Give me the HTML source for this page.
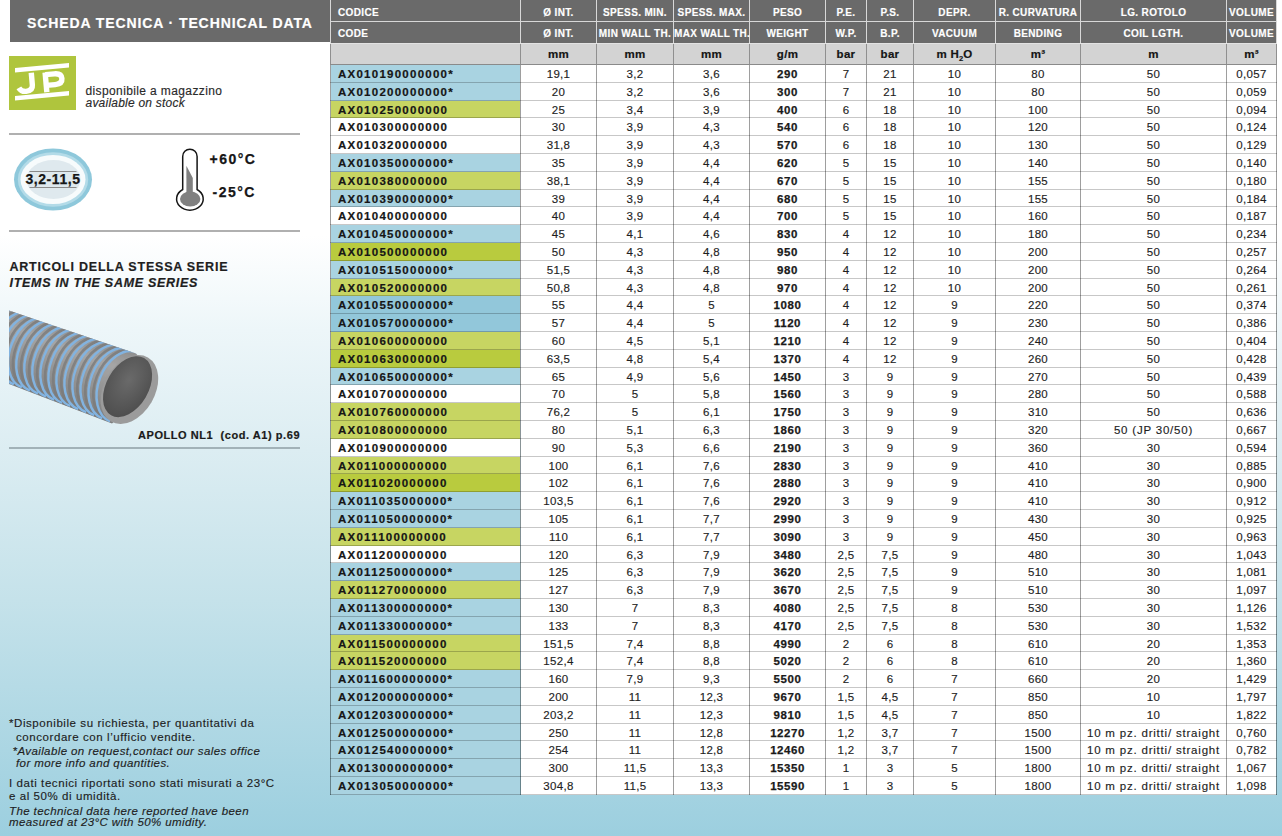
<!DOCTYPE html>
<html><head><meta charset="utf-8">
<style>
html,body{margin:0;padding:0;}
body{width:1282px;height:836px;overflow:hidden;position:relative;font-family:"Liberation Sans",sans-serif;
background:linear-gradient(to bottom,#ffffff 0px,#ffffff 235px,#edf6f9 330px,#dcedf2 450px,#c5e2ea 600px,#9ccfdf 836px);}
.a{position:absolute;}
.t{position:absolute;white-space:nowrap;}
.hl{position:absolute;height:1px;}
.vl{position:absolute;width:1px;}
.hd{position:absolute;color:#fff;font-weight:bold;font-size:10px;-webkit-text-stroke:0.15px #fff;letter-spacing:0.35px;white-space:nowrap;text-align:center;line-height:21px;}
.un{position:absolute;color:#151515;font-weight:bold;font-size:11.5px;-webkit-text-stroke:0.2px #151515;letter-spacing:0.3px;white-space:nowrap;text-align:center;line-height:21px;}
.cd{position:absolute;color:#161616;font-weight:bold;font-size:11.5px;letter-spacing:1.25px;-webkit-text-stroke:0.2px #161616;white-space:nowrap;line-height:18px;padding-left:8px;box-sizing:border-box;}
.dc{position:absolute;color:#1e1e1e;font-size:11.5px;-webkit-text-stroke:0.15px #1e1e1e;white-space:nowrap;text-align:center;line-height:18px;}
.bo{font-weight:bold;letter-spacing:0.55px !important;-webkit-text-stroke:0.25px #1a1a1a;color:#1a1a1a;}
sub{font-size:7.5px;vertical-align:-3px;line-height:0;letter-spacing:0;}
</style></head><body>

<div class="a" style="left:10px;top:0;width:320px;height:42px;background:#6a6a6a;"></div>
<div class="t" style="left:27px;top:15px;font-size:14px;font-weight:bold;color:#fff;letter-spacing:0.9px;line-height:17px;-webkit-text-stroke:0.2px #fff;">SCHEDA TECNICA &middot; TECHNICAL DATA</div>
<div class="a" style="left:330px;top:0;width:947px;height:43px;background:#6a6a6a;"></div>
<div class="a" style="left:330px;top:44px;width:947px;height:20px;background:#d3d3d3;"></div>
<div class="hl" style="left:330px;top:21px;width:947px;background:#d8d8d8;"></div>
<div class="hl" style="left:330px;top:43px;width:947px;background:#e2e2e2;"></div>
<div class="hl" style="left:330px;top:64px;width:947px;background:#8a8a8a;"></div>
<div class="vl" style="left:330px;top:0;height:43px;background:#d8d8d8;"></div>
<div class="vl" style="left:520px;top:0;height:43px;background:#d8d8d8;"></div>
<div class="vl" style="left:596px;top:0;height:43px;background:#d8d8d8;"></div>
<div class="vl" style="left:673px;top:0;height:43px;background:#d8d8d8;"></div>
<div class="vl" style="left:749px;top:0;height:43px;background:#d8d8d8;"></div>
<div class="vl" style="left:825px;top:0;height:43px;background:#d8d8d8;"></div>
<div class="vl" style="left:866px;top:0;height:43px;background:#d8d8d8;"></div>
<div class="vl" style="left:913px;top:0;height:43px;background:#d8d8d8;"></div>
<div class="vl" style="left:995px;top:0;height:43px;background:#d8d8d8;"></div>
<div class="vl" style="left:1080px;top:0;height:43px;background:#d8d8d8;"></div>
<div class="vl" style="left:1226px;top:0;height:43px;background:#d8d8d8;"></div>
<div class="vl" style="left:1276px;top:0;height:43px;background:#d8d8d8;"></div>
<div class="vl" style="left:330px;top:44px;height:20px;background:#8f8f8f;"></div>
<div class="vl" style="left:520px;top:44px;height:20px;background:#8f8f8f;"></div>
<div class="vl" style="left:596px;top:44px;height:20px;background:#8f8f8f;"></div>
<div class="vl" style="left:673px;top:44px;height:20px;background:#8f8f8f;"></div>
<div class="vl" style="left:749px;top:44px;height:20px;background:#8f8f8f;"></div>
<div class="vl" style="left:825px;top:44px;height:20px;background:#8f8f8f;"></div>
<div class="vl" style="left:866px;top:44px;height:20px;background:#8f8f8f;"></div>
<div class="vl" style="left:913px;top:44px;height:20px;background:#8f8f8f;"></div>
<div class="vl" style="left:995px;top:44px;height:20px;background:#8f8f8f;"></div>
<div class="vl" style="left:1080px;top:44px;height:20px;background:#8f8f8f;"></div>
<div class="vl" style="left:1226px;top:44px;height:20px;background:#8f8f8f;"></div>
<div class="vl" style="left:1276px;top:44px;height:20px;background:#8f8f8f;"></div>
<div class="hd" style="left:338px;top:1.7px;text-align:left;">CODICE</div>
<div class="hd" style="left:338px;top:23.2px;text-align:left;">CODE</div>
<div class="hd" style="left:521px;width:75px;top:1.7px;">&Oslash; INT.</div>
<div class="hd" style="left:521px;width:75px;top:23.2px;">&Oslash; INT.</div>
<div class="un" style="left:521px;width:75px;top:44.2px;">mm</div>
<div class="hd" style="left:597px;width:76px;top:1.7px;">SPESS. MIN.</div>
<div class="hd" style="left:597px;width:76px;top:23.2px;">MIN WALL TH.</div>
<div class="un" style="left:597px;width:76px;top:44.2px;">mm</div>
<div class="hd" style="left:674px;width:75px;top:1.7px;">SPESS. MAX.</div>
<div class="hd" style="left:674px;width:75px;top:23.2px;">MAX WALL TH.</div>
<div class="un" style="left:674px;width:75px;top:44.2px;">mm</div>
<div class="hd" style="left:750px;width:75px;top:1.7px;">PESO</div>
<div class="hd" style="left:750px;width:75px;top:23.2px;">WEIGHT</div>
<div class="un" style="left:750px;width:75px;top:44.2px;">g/m</div>
<div class="hd" style="left:826px;width:40px;top:1.7px;">P.E.</div>
<div class="hd" style="left:826px;width:40px;top:23.2px;">W.P.</div>
<div class="un" style="left:826px;width:40px;top:44.2px;">bar</div>
<div class="hd" style="left:867px;width:46px;top:1.7px;">P.S.</div>
<div class="hd" style="left:867px;width:46px;top:23.2px;">B.P.</div>
<div class="un" style="left:867px;width:46px;top:44.2px;">bar</div>
<div class="hd" style="left:914px;width:81px;top:1.7px;">DEPR.</div>
<div class="hd" style="left:914px;width:81px;top:23.2px;">VACUUM</div>
<div class="un" style="left:914px;width:81px;top:44.2px;">m H<sub>2</sub>O</div>
<div class="hd" style="left:996px;width:84px;top:1.7px;">R. CURVATURA</div>
<div class="hd" style="left:996px;width:84px;top:23.2px;">BENDING</div>
<div class="un" style="left:996px;width:84px;top:44.2px;">m&sup3;</div>
<div class="hd" style="left:1081px;width:145px;top:1.7px;">LG. ROTOLO</div>
<div class="hd" style="left:1081px;width:145px;top:23.2px;">COIL LGTH.</div>
<div class="un" style="left:1081px;width:145px;top:44.2px;">m</div>
<div class="hd" style="left:1227px;width:49px;top:1.7px;">VOLUME</div>
<div class="hd" style="left:1227px;width:49px;top:23.2px;">VOLUME</div>
<div class="un" style="left:1227px;width:49px;top:44.2px;">m&sup3;</div>
<div class="a" style="left:331px;top:65px;width:189px;height:18px;background:#a9d3e1;"></div>
<div class="a" style="left:521px;top:65px;width:755px;height:18px;background:#fff;"></div>
<div class="cd" style="left:330px;top:65px;height:18px;">AX010190000000*</div>
<div class="dc" style="left:521px;width:75px;top:64.8px;letter-spacing:0.3px;">19,1</div>
<div class="dc" style="left:597px;width:76px;top:64.8px;letter-spacing:0.3px;">3,2</div>
<div class="dc" style="left:674px;width:75px;top:64.8px;letter-spacing:0.3px;">3,6</div>
<div class="dc bo" style="left:750px;width:75px;top:64.8px;letter-spacing:0.3px;">290</div>
<div class="dc" style="left:826px;width:40px;top:64.8px;letter-spacing:0.3px;">7</div>
<div class="dc" style="left:867px;width:46px;top:64.8px;letter-spacing:0.3px;">21</div>
<div class="dc" style="left:914px;width:81px;top:64.8px;letter-spacing:0.3px;">10</div>
<div class="dc" style="left:996px;width:84px;top:64.8px;letter-spacing:0.3px;">80</div>
<div class="dc" style="left:1081px;width:145px;top:64.8px;letter-spacing:0.3px;">50</div>
<div class="dc" style="left:1227px;width:49px;top:64.8px;letter-spacing:0.3px;">0,057</div>
<div class="hl" style="left:330px;top:82px;width:947px;background:rgba(0,0,0,0.22);"></div>
<div class="a" style="left:331px;top:83px;width:189px;height:18px;background:#a9d3e1;"></div>
<div class="a" style="left:521px;top:83px;width:755px;height:18px;background:#fff;"></div>
<div class="cd" style="left:330px;top:83px;height:18px;">AX010200000000*</div>
<div class="dc" style="left:521px;width:75px;top:82.8px;letter-spacing:0.3px;">20</div>
<div class="dc" style="left:597px;width:76px;top:82.8px;letter-spacing:0.3px;">3,2</div>
<div class="dc" style="left:674px;width:75px;top:82.8px;letter-spacing:0.3px;">3,6</div>
<div class="dc bo" style="left:750px;width:75px;top:82.8px;letter-spacing:0.3px;">300</div>
<div class="dc" style="left:826px;width:40px;top:82.8px;letter-spacing:0.3px;">7</div>
<div class="dc" style="left:867px;width:46px;top:82.8px;letter-spacing:0.3px;">21</div>
<div class="dc" style="left:914px;width:81px;top:82.8px;letter-spacing:0.3px;">10</div>
<div class="dc" style="left:996px;width:84px;top:82.8px;letter-spacing:0.3px;">80</div>
<div class="dc" style="left:1081px;width:145px;top:82.8px;letter-spacing:0.3px;">50</div>
<div class="dc" style="left:1227px;width:49px;top:82.8px;letter-spacing:0.3px;">0,059</div>
<div class="hl" style="left:330px;top:100px;width:947px;background:rgba(0,0,0,0.22);"></div>
<div class="a" style="left:331px;top:101px;width:189px;height:17px;background:#c7d562;"></div>
<div class="a" style="left:521px;top:101px;width:755px;height:17px;background:#fff;"></div>
<div class="cd" style="left:330px;top:101px;height:17px;">AX010250000000</div>
<div class="dc" style="left:521px;width:75px;top:100.8px;letter-spacing:0.3px;">25</div>
<div class="dc" style="left:597px;width:76px;top:100.8px;letter-spacing:0.3px;">3,4</div>
<div class="dc" style="left:674px;width:75px;top:100.8px;letter-spacing:0.3px;">3,9</div>
<div class="dc bo" style="left:750px;width:75px;top:100.8px;letter-spacing:0.3px;">400</div>
<div class="dc" style="left:826px;width:40px;top:100.8px;letter-spacing:0.3px;">6</div>
<div class="dc" style="left:867px;width:46px;top:100.8px;letter-spacing:0.3px;">18</div>
<div class="dc" style="left:914px;width:81px;top:100.8px;letter-spacing:0.3px;">10</div>
<div class="dc" style="left:996px;width:84px;top:100.8px;letter-spacing:0.3px;">100</div>
<div class="dc" style="left:1081px;width:145px;top:100.8px;letter-spacing:0.3px;">50</div>
<div class="dc" style="left:1227px;width:49px;top:100.8px;letter-spacing:0.3px;">0,094</div>
<div class="hl" style="left:330px;top:117px;width:947px;background:rgba(0,0,0,0.22);"></div>
<div class="a" style="left:331px;top:118px;width:189px;height:18px;background:#ffffff;"></div>
<div class="a" style="left:521px;top:118px;width:755px;height:18px;background:#fff;"></div>
<div class="cd" style="left:330px;top:118px;height:18px;">AX010300000000</div>
<div class="dc" style="left:521px;width:75px;top:117.8px;letter-spacing:0.3px;">30</div>
<div class="dc" style="left:597px;width:76px;top:117.8px;letter-spacing:0.3px;">3,9</div>
<div class="dc" style="left:674px;width:75px;top:117.8px;letter-spacing:0.3px;">4,3</div>
<div class="dc bo" style="left:750px;width:75px;top:117.8px;letter-spacing:0.3px;">540</div>
<div class="dc" style="left:826px;width:40px;top:117.8px;letter-spacing:0.3px;">6</div>
<div class="dc" style="left:867px;width:46px;top:117.8px;letter-spacing:0.3px;">18</div>
<div class="dc" style="left:914px;width:81px;top:117.8px;letter-spacing:0.3px;">10</div>
<div class="dc" style="left:996px;width:84px;top:117.8px;letter-spacing:0.3px;">120</div>
<div class="dc" style="left:1081px;width:145px;top:117.8px;letter-spacing:0.3px;">50</div>
<div class="dc" style="left:1227px;width:49px;top:117.8px;letter-spacing:0.3px;">0,124</div>
<div class="hl" style="left:330px;top:135px;width:947px;background:rgba(0,0,0,0.22);"></div>
<div class="a" style="left:331px;top:136px;width:189px;height:18px;background:#ffffff;"></div>
<div class="a" style="left:521px;top:136px;width:755px;height:18px;background:#fff;"></div>
<div class="cd" style="left:330px;top:136px;height:18px;">AX010320000000</div>
<div class="dc" style="left:521px;width:75px;top:135.8px;letter-spacing:0.3px;">31,8</div>
<div class="dc" style="left:597px;width:76px;top:135.8px;letter-spacing:0.3px;">3,9</div>
<div class="dc" style="left:674px;width:75px;top:135.8px;letter-spacing:0.3px;">4,3</div>
<div class="dc bo" style="left:750px;width:75px;top:135.8px;letter-spacing:0.3px;">570</div>
<div class="dc" style="left:826px;width:40px;top:135.8px;letter-spacing:0.3px;">6</div>
<div class="dc" style="left:867px;width:46px;top:135.8px;letter-spacing:0.3px;">18</div>
<div class="dc" style="left:914px;width:81px;top:135.8px;letter-spacing:0.3px;">10</div>
<div class="dc" style="left:996px;width:84px;top:135.8px;letter-spacing:0.3px;">130</div>
<div class="dc" style="left:1081px;width:145px;top:135.8px;letter-spacing:0.3px;">50</div>
<div class="dc" style="left:1227px;width:49px;top:135.8px;letter-spacing:0.3px;">0,129</div>
<div class="hl" style="left:330px;top:153px;width:947px;background:rgba(0,0,0,0.22);"></div>
<div class="a" style="left:331px;top:154px;width:189px;height:18px;background:#a9d3e1;"></div>
<div class="a" style="left:521px;top:154px;width:755px;height:18px;background:#fff;"></div>
<div class="cd" style="left:330px;top:154px;height:18px;">AX010350000000*</div>
<div class="dc" style="left:521px;width:75px;top:153.8px;letter-spacing:0.3px;">35</div>
<div class="dc" style="left:597px;width:76px;top:153.8px;letter-spacing:0.3px;">3,9</div>
<div class="dc" style="left:674px;width:75px;top:153.8px;letter-spacing:0.3px;">4,4</div>
<div class="dc bo" style="left:750px;width:75px;top:153.8px;letter-spacing:0.3px;">620</div>
<div class="dc" style="left:826px;width:40px;top:153.8px;letter-spacing:0.3px;">5</div>
<div class="dc" style="left:867px;width:46px;top:153.8px;letter-spacing:0.3px;">15</div>
<div class="dc" style="left:914px;width:81px;top:153.8px;letter-spacing:0.3px;">10</div>
<div class="dc" style="left:996px;width:84px;top:153.8px;letter-spacing:0.3px;">140</div>
<div class="dc" style="left:1081px;width:145px;top:153.8px;letter-spacing:0.3px;">50</div>
<div class="dc" style="left:1227px;width:49px;top:153.8px;letter-spacing:0.3px;">0,140</div>
<div class="hl" style="left:330px;top:171px;width:947px;background:rgba(0,0,0,0.22);"></div>
<div class="a" style="left:331px;top:172px;width:189px;height:18px;background:#c7d562;"></div>
<div class="a" style="left:521px;top:172px;width:755px;height:18px;background:#fff;"></div>
<div class="cd" style="left:330px;top:172px;height:18px;">AX010380000000</div>
<div class="dc" style="left:521px;width:75px;top:171.8px;letter-spacing:0.3px;">38,1</div>
<div class="dc" style="left:597px;width:76px;top:171.8px;letter-spacing:0.3px;">3,9</div>
<div class="dc" style="left:674px;width:75px;top:171.8px;letter-spacing:0.3px;">4,4</div>
<div class="dc bo" style="left:750px;width:75px;top:171.8px;letter-spacing:0.3px;">670</div>
<div class="dc" style="left:826px;width:40px;top:171.8px;letter-spacing:0.3px;">5</div>
<div class="dc" style="left:867px;width:46px;top:171.8px;letter-spacing:0.3px;">15</div>
<div class="dc" style="left:914px;width:81px;top:171.8px;letter-spacing:0.3px;">10</div>
<div class="dc" style="left:996px;width:84px;top:171.8px;letter-spacing:0.3px;">155</div>
<div class="dc" style="left:1081px;width:145px;top:171.8px;letter-spacing:0.3px;">50</div>
<div class="dc" style="left:1227px;width:49px;top:171.8px;letter-spacing:0.3px;">0,180</div>
<div class="hl" style="left:330px;top:189px;width:947px;background:rgba(0,0,0,0.22);"></div>
<div class="a" style="left:331px;top:190px;width:189px;height:17px;background:#a9d3e1;"></div>
<div class="a" style="left:521px;top:190px;width:755px;height:17px;background:#fff;"></div>
<div class="cd" style="left:330px;top:190px;height:17px;">AX010390000000*</div>
<div class="dc" style="left:521px;width:75px;top:189.8px;letter-spacing:0.3px;">39</div>
<div class="dc" style="left:597px;width:76px;top:189.8px;letter-spacing:0.3px;">3,9</div>
<div class="dc" style="left:674px;width:75px;top:189.8px;letter-spacing:0.3px;">4,4</div>
<div class="dc bo" style="left:750px;width:75px;top:189.8px;letter-spacing:0.3px;">680</div>
<div class="dc" style="left:826px;width:40px;top:189.8px;letter-spacing:0.3px;">5</div>
<div class="dc" style="left:867px;width:46px;top:189.8px;letter-spacing:0.3px;">15</div>
<div class="dc" style="left:914px;width:81px;top:189.8px;letter-spacing:0.3px;">10</div>
<div class="dc" style="left:996px;width:84px;top:189.8px;letter-spacing:0.3px;">155</div>
<div class="dc" style="left:1081px;width:145px;top:189.8px;letter-spacing:0.3px;">50</div>
<div class="dc" style="left:1227px;width:49px;top:189.8px;letter-spacing:0.3px;">0,184</div>
<div class="hl" style="left:330px;top:206px;width:947px;background:rgba(0,0,0,0.22);"></div>
<div class="a" style="left:331px;top:207px;width:189px;height:18px;background:#ffffff;"></div>
<div class="a" style="left:521px;top:207px;width:755px;height:18px;background:#fff;"></div>
<div class="cd" style="left:330px;top:207px;height:18px;">AX010400000000</div>
<div class="dc" style="left:521px;width:75px;top:206.8px;letter-spacing:0.3px;">40</div>
<div class="dc" style="left:597px;width:76px;top:206.8px;letter-spacing:0.3px;">3,9</div>
<div class="dc" style="left:674px;width:75px;top:206.8px;letter-spacing:0.3px;">4,4</div>
<div class="dc bo" style="left:750px;width:75px;top:206.8px;letter-spacing:0.3px;">700</div>
<div class="dc" style="left:826px;width:40px;top:206.8px;letter-spacing:0.3px;">5</div>
<div class="dc" style="left:867px;width:46px;top:206.8px;letter-spacing:0.3px;">15</div>
<div class="dc" style="left:914px;width:81px;top:206.8px;letter-spacing:0.3px;">10</div>
<div class="dc" style="left:996px;width:84px;top:206.8px;letter-spacing:0.3px;">160</div>
<div class="dc" style="left:1081px;width:145px;top:206.8px;letter-spacing:0.3px;">50</div>
<div class="dc" style="left:1227px;width:49px;top:206.8px;letter-spacing:0.3px;">0,187</div>
<div class="hl" style="left:330px;top:224px;width:947px;background:rgba(0,0,0,0.22);"></div>
<div class="a" style="left:331px;top:225px;width:189px;height:18px;background:#a9d3e1;"></div>
<div class="a" style="left:521px;top:225px;width:755px;height:18px;background:#fff;"></div>
<div class="cd" style="left:330px;top:225px;height:18px;">AX010450000000*</div>
<div class="dc" style="left:521px;width:75px;top:224.8px;letter-spacing:0.3px;">45</div>
<div class="dc" style="left:597px;width:76px;top:224.8px;letter-spacing:0.3px;">4,1</div>
<div class="dc" style="left:674px;width:75px;top:224.8px;letter-spacing:0.3px;">4,6</div>
<div class="dc bo" style="left:750px;width:75px;top:224.8px;letter-spacing:0.3px;">830</div>
<div class="dc" style="left:826px;width:40px;top:224.8px;letter-spacing:0.3px;">4</div>
<div class="dc" style="left:867px;width:46px;top:224.8px;letter-spacing:0.3px;">12</div>
<div class="dc" style="left:914px;width:81px;top:224.8px;letter-spacing:0.3px;">10</div>
<div class="dc" style="left:996px;width:84px;top:224.8px;letter-spacing:0.3px;">180</div>
<div class="dc" style="left:1081px;width:145px;top:224.8px;letter-spacing:0.3px;">50</div>
<div class="dc" style="left:1227px;width:49px;top:224.8px;letter-spacing:0.3px;">0,234</div>
<div class="hl" style="left:330px;top:242px;width:947px;background:rgba(0,0,0,0.22);"></div>
<div class="a" style="left:331px;top:243px;width:189px;height:18px;background:#b9cb3e;"></div>
<div class="a" style="left:521px;top:243px;width:755px;height:18px;background:#fff;"></div>
<div class="cd" style="left:330px;top:243px;height:18px;">AX010500000000</div>
<div class="dc" style="left:521px;width:75px;top:242.8px;letter-spacing:0.3px;">50</div>
<div class="dc" style="left:597px;width:76px;top:242.8px;letter-spacing:0.3px;">4,3</div>
<div class="dc" style="left:674px;width:75px;top:242.8px;letter-spacing:0.3px;">4,8</div>
<div class="dc bo" style="left:750px;width:75px;top:242.8px;letter-spacing:0.3px;">950</div>
<div class="dc" style="left:826px;width:40px;top:242.8px;letter-spacing:0.3px;">4</div>
<div class="dc" style="left:867px;width:46px;top:242.8px;letter-spacing:0.3px;">12</div>
<div class="dc" style="left:914px;width:81px;top:242.8px;letter-spacing:0.3px;">10</div>
<div class="dc" style="left:996px;width:84px;top:242.8px;letter-spacing:0.3px;">200</div>
<div class="dc" style="left:1081px;width:145px;top:242.8px;letter-spacing:0.3px;">50</div>
<div class="dc" style="left:1227px;width:49px;top:242.8px;letter-spacing:0.3px;">0,257</div>
<div class="hl" style="left:330px;top:260px;width:947px;background:rgba(0,0,0,0.22);"></div>
<div class="a" style="left:331px;top:261px;width:189px;height:18px;background:#a9d3e1;"></div>
<div class="a" style="left:521px;top:261px;width:755px;height:18px;background:#fff;"></div>
<div class="cd" style="left:330px;top:261px;height:18px;">AX010515000000*</div>
<div class="dc" style="left:521px;width:75px;top:260.8px;letter-spacing:0.3px;">51,5</div>
<div class="dc" style="left:597px;width:76px;top:260.8px;letter-spacing:0.3px;">4,3</div>
<div class="dc" style="left:674px;width:75px;top:260.8px;letter-spacing:0.3px;">4,8</div>
<div class="dc bo" style="left:750px;width:75px;top:260.8px;letter-spacing:0.3px;">980</div>
<div class="dc" style="left:826px;width:40px;top:260.8px;letter-spacing:0.3px;">4</div>
<div class="dc" style="left:867px;width:46px;top:260.8px;letter-spacing:0.3px;">12</div>
<div class="dc" style="left:914px;width:81px;top:260.8px;letter-spacing:0.3px;">10</div>
<div class="dc" style="left:996px;width:84px;top:260.8px;letter-spacing:0.3px;">200</div>
<div class="dc" style="left:1081px;width:145px;top:260.8px;letter-spacing:0.3px;">50</div>
<div class="dc" style="left:1227px;width:49px;top:260.8px;letter-spacing:0.3px;">0,264</div>
<div class="hl" style="left:330px;top:278px;width:947px;background:rgba(0,0,0,0.22);"></div>
<div class="a" style="left:331px;top:279px;width:189px;height:17px;background:#c7d562;"></div>
<div class="a" style="left:521px;top:279px;width:755px;height:17px;background:#fff;"></div>
<div class="cd" style="left:330px;top:279px;height:17px;">AX010520000000</div>
<div class="dc" style="left:521px;width:75px;top:278.8px;letter-spacing:0.3px;">50,8</div>
<div class="dc" style="left:597px;width:76px;top:278.8px;letter-spacing:0.3px;">4,3</div>
<div class="dc" style="left:674px;width:75px;top:278.8px;letter-spacing:0.3px;">4,8</div>
<div class="dc bo" style="left:750px;width:75px;top:278.8px;letter-spacing:0.3px;">970</div>
<div class="dc" style="left:826px;width:40px;top:278.8px;letter-spacing:0.3px;">4</div>
<div class="dc" style="left:867px;width:46px;top:278.8px;letter-spacing:0.3px;">12</div>
<div class="dc" style="left:914px;width:81px;top:278.8px;letter-spacing:0.3px;">10</div>
<div class="dc" style="left:996px;width:84px;top:278.8px;letter-spacing:0.3px;">200</div>
<div class="dc" style="left:1081px;width:145px;top:278.8px;letter-spacing:0.3px;">50</div>
<div class="dc" style="left:1227px;width:49px;top:278.8px;letter-spacing:0.3px;">0,261</div>
<div class="hl" style="left:330px;top:295px;width:947px;background:rgba(0,0,0,0.22);"></div>
<div class="a" style="left:331px;top:296px;width:189px;height:18px;background:#92c7da;"></div>
<div class="a" style="left:521px;top:296px;width:755px;height:18px;background:#fff;"></div>
<div class="cd" style="left:330px;top:296px;height:18px;">AX010550000000*</div>
<div class="dc" style="left:521px;width:75px;top:295.8px;letter-spacing:0.3px;">55</div>
<div class="dc" style="left:597px;width:76px;top:295.8px;letter-spacing:0.3px;">4,4</div>
<div class="dc" style="left:674px;width:75px;top:295.8px;letter-spacing:0.3px;">5</div>
<div class="dc bo" style="left:750px;width:75px;top:295.8px;letter-spacing:0.3px;">1080</div>
<div class="dc" style="left:826px;width:40px;top:295.8px;letter-spacing:0.3px;">4</div>
<div class="dc" style="left:867px;width:46px;top:295.8px;letter-spacing:0.3px;">12</div>
<div class="dc" style="left:914px;width:81px;top:295.8px;letter-spacing:0.3px;">9</div>
<div class="dc" style="left:996px;width:84px;top:295.8px;letter-spacing:0.3px;">220</div>
<div class="dc" style="left:1081px;width:145px;top:295.8px;letter-spacing:0.3px;">50</div>
<div class="dc" style="left:1227px;width:49px;top:295.8px;letter-spacing:0.3px;">0,374</div>
<div class="hl" style="left:330px;top:313px;width:947px;background:rgba(0,0,0,0.22);"></div>
<div class="a" style="left:331px;top:314px;width:189px;height:18px;background:#92c7da;"></div>
<div class="a" style="left:521px;top:314px;width:755px;height:18px;background:#fff;"></div>
<div class="cd" style="left:330px;top:314px;height:18px;">AX010570000000*</div>
<div class="dc" style="left:521px;width:75px;top:313.8px;letter-spacing:0.3px;">57</div>
<div class="dc" style="left:597px;width:76px;top:313.8px;letter-spacing:0.3px;">4,4</div>
<div class="dc" style="left:674px;width:75px;top:313.8px;letter-spacing:0.3px;">5</div>
<div class="dc bo" style="left:750px;width:75px;top:313.8px;letter-spacing:0.3px;">1120</div>
<div class="dc" style="left:826px;width:40px;top:313.8px;letter-spacing:0.3px;">4</div>
<div class="dc" style="left:867px;width:46px;top:313.8px;letter-spacing:0.3px;">12</div>
<div class="dc" style="left:914px;width:81px;top:313.8px;letter-spacing:0.3px;">9</div>
<div class="dc" style="left:996px;width:84px;top:313.8px;letter-spacing:0.3px;">230</div>
<div class="dc" style="left:1081px;width:145px;top:313.8px;letter-spacing:0.3px;">50</div>
<div class="dc" style="left:1227px;width:49px;top:313.8px;letter-spacing:0.3px;">0,386</div>
<div class="hl" style="left:330px;top:331px;width:947px;background:rgba(0,0,0,0.22);"></div>
<div class="a" style="left:331px;top:332px;width:189px;height:18px;background:#c7d562;"></div>
<div class="a" style="left:521px;top:332px;width:755px;height:18px;background:#fff;"></div>
<div class="cd" style="left:330px;top:332px;height:18px;">AX010600000000</div>
<div class="dc" style="left:521px;width:75px;top:331.8px;letter-spacing:0.3px;">60</div>
<div class="dc" style="left:597px;width:76px;top:331.8px;letter-spacing:0.3px;">4,5</div>
<div class="dc" style="left:674px;width:75px;top:331.8px;letter-spacing:0.3px;">5,1</div>
<div class="dc bo" style="left:750px;width:75px;top:331.8px;letter-spacing:0.3px;">1210</div>
<div class="dc" style="left:826px;width:40px;top:331.8px;letter-spacing:0.3px;">4</div>
<div class="dc" style="left:867px;width:46px;top:331.8px;letter-spacing:0.3px;">12</div>
<div class="dc" style="left:914px;width:81px;top:331.8px;letter-spacing:0.3px;">9</div>
<div class="dc" style="left:996px;width:84px;top:331.8px;letter-spacing:0.3px;">240</div>
<div class="dc" style="left:1081px;width:145px;top:331.8px;letter-spacing:0.3px;">50</div>
<div class="dc" style="left:1227px;width:49px;top:331.8px;letter-spacing:0.3px;">0,404</div>
<div class="hl" style="left:330px;top:349px;width:947px;background:rgba(0,0,0,0.22);"></div>
<div class="a" style="left:331px;top:350px;width:189px;height:18px;background:#b9cb3e;"></div>
<div class="a" style="left:521px;top:350px;width:755px;height:18px;background:#fff;"></div>
<div class="cd" style="left:330px;top:350px;height:18px;">AX010630000000</div>
<div class="dc" style="left:521px;width:75px;top:349.8px;letter-spacing:0.3px;">63,5</div>
<div class="dc" style="left:597px;width:76px;top:349.8px;letter-spacing:0.3px;">4,8</div>
<div class="dc" style="left:674px;width:75px;top:349.8px;letter-spacing:0.3px;">5,4</div>
<div class="dc bo" style="left:750px;width:75px;top:349.8px;letter-spacing:0.3px;">1370</div>
<div class="dc" style="left:826px;width:40px;top:349.8px;letter-spacing:0.3px;">4</div>
<div class="dc" style="left:867px;width:46px;top:349.8px;letter-spacing:0.3px;">12</div>
<div class="dc" style="left:914px;width:81px;top:349.8px;letter-spacing:0.3px;">9</div>
<div class="dc" style="left:996px;width:84px;top:349.8px;letter-spacing:0.3px;">260</div>
<div class="dc" style="left:1081px;width:145px;top:349.8px;letter-spacing:0.3px;">50</div>
<div class="dc" style="left:1227px;width:49px;top:349.8px;letter-spacing:0.3px;">0,428</div>
<div class="hl" style="left:330px;top:367px;width:947px;background:rgba(0,0,0,0.22);"></div>
<div class="a" style="left:331px;top:368px;width:189px;height:17px;background:#a9d3e1;"></div>
<div class="a" style="left:521px;top:368px;width:755px;height:17px;background:#fff;"></div>
<div class="cd" style="left:330px;top:368px;height:17px;">AX010650000000*</div>
<div class="dc" style="left:521px;width:75px;top:367.8px;letter-spacing:0.3px;">65</div>
<div class="dc" style="left:597px;width:76px;top:367.8px;letter-spacing:0.3px;">4,9</div>
<div class="dc" style="left:674px;width:75px;top:367.8px;letter-spacing:0.3px;">5,6</div>
<div class="dc bo" style="left:750px;width:75px;top:367.8px;letter-spacing:0.3px;">1450</div>
<div class="dc" style="left:826px;width:40px;top:367.8px;letter-spacing:0.3px;">3</div>
<div class="dc" style="left:867px;width:46px;top:367.8px;letter-spacing:0.3px;">9</div>
<div class="dc" style="left:914px;width:81px;top:367.8px;letter-spacing:0.3px;">9</div>
<div class="dc" style="left:996px;width:84px;top:367.8px;letter-spacing:0.3px;">270</div>
<div class="dc" style="left:1081px;width:145px;top:367.8px;letter-spacing:0.3px;">50</div>
<div class="dc" style="left:1227px;width:49px;top:367.8px;letter-spacing:0.3px;">0,439</div>
<div class="hl" style="left:330px;top:384px;width:947px;background:rgba(0,0,0,0.22);"></div>
<div class="a" style="left:331px;top:385px;width:189px;height:18px;background:#ffffff;"></div>
<div class="a" style="left:521px;top:385px;width:755px;height:18px;background:#fff;"></div>
<div class="cd" style="left:330px;top:385px;height:18px;">AX010700000000</div>
<div class="dc" style="left:521px;width:75px;top:384.8px;letter-spacing:0.3px;">70</div>
<div class="dc" style="left:597px;width:76px;top:384.8px;letter-spacing:0.3px;">5</div>
<div class="dc" style="left:674px;width:75px;top:384.8px;letter-spacing:0.3px;">5,8</div>
<div class="dc bo" style="left:750px;width:75px;top:384.8px;letter-spacing:0.3px;">1560</div>
<div class="dc" style="left:826px;width:40px;top:384.8px;letter-spacing:0.3px;">3</div>
<div class="dc" style="left:867px;width:46px;top:384.8px;letter-spacing:0.3px;">9</div>
<div class="dc" style="left:914px;width:81px;top:384.8px;letter-spacing:0.3px;">9</div>
<div class="dc" style="left:996px;width:84px;top:384.8px;letter-spacing:0.3px;">280</div>
<div class="dc" style="left:1081px;width:145px;top:384.8px;letter-spacing:0.3px;">50</div>
<div class="dc" style="left:1227px;width:49px;top:384.8px;letter-spacing:0.3px;">0,588</div>
<div class="hl" style="left:330px;top:402px;width:947px;background:rgba(0,0,0,0.22);"></div>
<div class="a" style="left:331px;top:403px;width:189px;height:18px;background:#c7d562;"></div>
<div class="a" style="left:521px;top:403px;width:755px;height:18px;background:#fff;"></div>
<div class="cd" style="left:330px;top:403px;height:18px;">AX010760000000</div>
<div class="dc" style="left:521px;width:75px;top:402.8px;letter-spacing:0.3px;">76,2</div>
<div class="dc" style="left:597px;width:76px;top:402.8px;letter-spacing:0.3px;">5</div>
<div class="dc" style="left:674px;width:75px;top:402.8px;letter-spacing:0.3px;">6,1</div>
<div class="dc bo" style="left:750px;width:75px;top:402.8px;letter-spacing:0.3px;">1750</div>
<div class="dc" style="left:826px;width:40px;top:402.8px;letter-spacing:0.3px;">3</div>
<div class="dc" style="left:867px;width:46px;top:402.8px;letter-spacing:0.3px;">9</div>
<div class="dc" style="left:914px;width:81px;top:402.8px;letter-spacing:0.3px;">9</div>
<div class="dc" style="left:996px;width:84px;top:402.8px;letter-spacing:0.3px;">310</div>
<div class="dc" style="left:1081px;width:145px;top:402.8px;letter-spacing:0.3px;">50</div>
<div class="dc" style="left:1227px;width:49px;top:402.8px;letter-spacing:0.3px;">0,636</div>
<div class="hl" style="left:330px;top:420px;width:947px;background:rgba(0,0,0,0.22);"></div>
<div class="a" style="left:331px;top:421px;width:189px;height:18px;background:#c7d562;"></div>
<div class="a" style="left:521px;top:421px;width:755px;height:18px;background:#fff;"></div>
<div class="cd" style="left:330px;top:421px;height:18px;">AX010800000000</div>
<div class="dc" style="left:521px;width:75px;top:420.8px;letter-spacing:0.3px;">80</div>
<div class="dc" style="left:597px;width:76px;top:420.8px;letter-spacing:0.3px;">5,1</div>
<div class="dc" style="left:674px;width:75px;top:420.8px;letter-spacing:0.3px;">6,3</div>
<div class="dc bo" style="left:750px;width:75px;top:420.8px;letter-spacing:0.3px;">1860</div>
<div class="dc" style="left:826px;width:40px;top:420.8px;letter-spacing:0.3px;">3</div>
<div class="dc" style="left:867px;width:46px;top:420.8px;letter-spacing:0.3px;">9</div>
<div class="dc" style="left:914px;width:81px;top:420.8px;letter-spacing:0.3px;">9</div>
<div class="dc" style="left:996px;width:84px;top:420.8px;letter-spacing:0.3px;">320</div>
<div class="dc" style="left:1081px;width:145px;top:420.8px;letter-spacing:0.8px;">50 (JP 30/50)</div>
<div class="dc" style="left:1227px;width:49px;top:420.8px;letter-spacing:0.3px;">0,667</div>
<div class="hl" style="left:330px;top:438px;width:947px;background:rgba(0,0,0,0.22);"></div>
<div class="a" style="left:331px;top:439px;width:189px;height:18px;background:#ffffff;"></div>
<div class="a" style="left:521px;top:439px;width:755px;height:18px;background:#fff;"></div>
<div class="cd" style="left:330px;top:439px;height:18px;">AX010900000000</div>
<div class="dc" style="left:521px;width:75px;top:438.8px;letter-spacing:0.3px;">90</div>
<div class="dc" style="left:597px;width:76px;top:438.8px;letter-spacing:0.3px;">5,3</div>
<div class="dc" style="left:674px;width:75px;top:438.8px;letter-spacing:0.3px;">6,6</div>
<div class="dc bo" style="left:750px;width:75px;top:438.8px;letter-spacing:0.3px;">2190</div>
<div class="dc" style="left:826px;width:40px;top:438.8px;letter-spacing:0.3px;">3</div>
<div class="dc" style="left:867px;width:46px;top:438.8px;letter-spacing:0.3px;">9</div>
<div class="dc" style="left:914px;width:81px;top:438.8px;letter-spacing:0.3px;">9</div>
<div class="dc" style="left:996px;width:84px;top:438.8px;letter-spacing:0.3px;">360</div>
<div class="dc" style="left:1081px;width:145px;top:438.8px;letter-spacing:0.3px;">30</div>
<div class="dc" style="left:1227px;width:49px;top:438.8px;letter-spacing:0.3px;">0,594</div>
<div class="hl" style="left:330px;top:456px;width:947px;background:rgba(0,0,0,0.22);"></div>
<div class="a" style="left:331px;top:457px;width:189px;height:17px;background:#c7d562;"></div>
<div class="a" style="left:521px;top:457px;width:755px;height:17px;background:#fff;"></div>
<div class="cd" style="left:330px;top:457px;height:17px;">AX011000000000</div>
<div class="dc" style="left:521px;width:75px;top:456.8px;letter-spacing:0.3px;">100</div>
<div class="dc" style="left:597px;width:76px;top:456.8px;letter-spacing:0.3px;">6,1</div>
<div class="dc" style="left:674px;width:75px;top:456.8px;letter-spacing:0.3px;">7,6</div>
<div class="dc bo" style="left:750px;width:75px;top:456.8px;letter-spacing:0.3px;">2830</div>
<div class="dc" style="left:826px;width:40px;top:456.8px;letter-spacing:0.3px;">3</div>
<div class="dc" style="left:867px;width:46px;top:456.8px;letter-spacing:0.3px;">9</div>
<div class="dc" style="left:914px;width:81px;top:456.8px;letter-spacing:0.3px;">9</div>
<div class="dc" style="left:996px;width:84px;top:456.8px;letter-spacing:0.3px;">410</div>
<div class="dc" style="left:1081px;width:145px;top:456.8px;letter-spacing:0.3px;">30</div>
<div class="dc" style="left:1227px;width:49px;top:456.8px;letter-spacing:0.3px;">0,885</div>
<div class="hl" style="left:330px;top:473px;width:947px;background:rgba(0,0,0,0.22);"></div>
<div class="a" style="left:331px;top:474px;width:189px;height:18px;background:#b9cb3e;"></div>
<div class="a" style="left:521px;top:474px;width:755px;height:18px;background:#fff;"></div>
<div class="cd" style="left:330px;top:474px;height:18px;">AX011020000000</div>
<div class="dc" style="left:521px;width:75px;top:473.8px;letter-spacing:0.3px;">102</div>
<div class="dc" style="left:597px;width:76px;top:473.8px;letter-spacing:0.3px;">6,1</div>
<div class="dc" style="left:674px;width:75px;top:473.8px;letter-spacing:0.3px;">7,6</div>
<div class="dc bo" style="left:750px;width:75px;top:473.8px;letter-spacing:0.3px;">2880</div>
<div class="dc" style="left:826px;width:40px;top:473.8px;letter-spacing:0.3px;">3</div>
<div class="dc" style="left:867px;width:46px;top:473.8px;letter-spacing:0.3px;">9</div>
<div class="dc" style="left:914px;width:81px;top:473.8px;letter-spacing:0.3px;">9</div>
<div class="dc" style="left:996px;width:84px;top:473.8px;letter-spacing:0.3px;">410</div>
<div class="dc" style="left:1081px;width:145px;top:473.8px;letter-spacing:0.3px;">30</div>
<div class="dc" style="left:1227px;width:49px;top:473.8px;letter-spacing:0.3px;">0,900</div>
<div class="hl" style="left:330px;top:491px;width:947px;background:rgba(0,0,0,0.22);"></div>
<div class="a" style="left:331px;top:492px;width:189px;height:18px;background:#a9d3e1;"></div>
<div class="a" style="left:521px;top:492px;width:755px;height:18px;background:#fff;"></div>
<div class="cd" style="left:330px;top:492px;height:18px;">AX011035000000*</div>
<div class="dc" style="left:521px;width:75px;top:491.8px;letter-spacing:0.3px;">103,5</div>
<div class="dc" style="left:597px;width:76px;top:491.8px;letter-spacing:0.3px;">6,1</div>
<div class="dc" style="left:674px;width:75px;top:491.8px;letter-spacing:0.3px;">7,6</div>
<div class="dc bo" style="left:750px;width:75px;top:491.8px;letter-spacing:0.3px;">2920</div>
<div class="dc" style="left:826px;width:40px;top:491.8px;letter-spacing:0.3px;">3</div>
<div class="dc" style="left:867px;width:46px;top:491.8px;letter-spacing:0.3px;">9</div>
<div class="dc" style="left:914px;width:81px;top:491.8px;letter-spacing:0.3px;">9</div>
<div class="dc" style="left:996px;width:84px;top:491.8px;letter-spacing:0.3px;">410</div>
<div class="dc" style="left:1081px;width:145px;top:491.8px;letter-spacing:0.3px;">30</div>
<div class="dc" style="left:1227px;width:49px;top:491.8px;letter-spacing:0.3px;">0,912</div>
<div class="hl" style="left:330px;top:509px;width:947px;background:rgba(0,0,0,0.22);"></div>
<div class="a" style="left:331px;top:510px;width:189px;height:18px;background:#a9d3e1;"></div>
<div class="a" style="left:521px;top:510px;width:755px;height:18px;background:#fff;"></div>
<div class="cd" style="left:330px;top:510px;height:18px;">AX011050000000*</div>
<div class="dc" style="left:521px;width:75px;top:509.8px;letter-spacing:0.3px;">105</div>
<div class="dc" style="left:597px;width:76px;top:509.8px;letter-spacing:0.3px;">6,1</div>
<div class="dc" style="left:674px;width:75px;top:509.8px;letter-spacing:0.3px;">7,7</div>
<div class="dc bo" style="left:750px;width:75px;top:509.8px;letter-spacing:0.3px;">2990</div>
<div class="dc" style="left:826px;width:40px;top:509.8px;letter-spacing:0.3px;">3</div>
<div class="dc" style="left:867px;width:46px;top:509.8px;letter-spacing:0.3px;">9</div>
<div class="dc" style="left:914px;width:81px;top:509.8px;letter-spacing:0.3px;">9</div>
<div class="dc" style="left:996px;width:84px;top:509.8px;letter-spacing:0.3px;">430</div>
<div class="dc" style="left:1081px;width:145px;top:509.8px;letter-spacing:0.3px;">30</div>
<div class="dc" style="left:1227px;width:49px;top:509.8px;letter-spacing:0.3px;">0,925</div>
<div class="hl" style="left:330px;top:527px;width:947px;background:rgba(0,0,0,0.22);"></div>
<div class="a" style="left:331px;top:528px;width:189px;height:18px;background:#c7d562;"></div>
<div class="a" style="left:521px;top:528px;width:755px;height:18px;background:#fff;"></div>
<div class="cd" style="left:330px;top:528px;height:18px;">AX011100000000</div>
<div class="dc" style="left:521px;width:75px;top:527.8px;letter-spacing:0.3px;">110</div>
<div class="dc" style="left:597px;width:76px;top:527.8px;letter-spacing:0.3px;">6,1</div>
<div class="dc" style="left:674px;width:75px;top:527.8px;letter-spacing:0.3px;">7,7</div>
<div class="dc bo" style="left:750px;width:75px;top:527.8px;letter-spacing:0.3px;">3090</div>
<div class="dc" style="left:826px;width:40px;top:527.8px;letter-spacing:0.3px;">3</div>
<div class="dc" style="left:867px;width:46px;top:527.8px;letter-spacing:0.3px;">9</div>
<div class="dc" style="left:914px;width:81px;top:527.8px;letter-spacing:0.3px;">9</div>
<div class="dc" style="left:996px;width:84px;top:527.8px;letter-spacing:0.3px;">450</div>
<div class="dc" style="left:1081px;width:145px;top:527.8px;letter-spacing:0.3px;">30</div>
<div class="dc" style="left:1227px;width:49px;top:527.8px;letter-spacing:0.3px;">0,963</div>
<div class="hl" style="left:330px;top:545px;width:947px;background:rgba(0,0,0,0.22);"></div>
<div class="a" style="left:331px;top:546px;width:189px;height:17px;background:#ffffff;"></div>
<div class="a" style="left:521px;top:546px;width:755px;height:17px;background:#fff;"></div>
<div class="cd" style="left:330px;top:546px;height:17px;">AX011200000000</div>
<div class="dc" style="left:521px;width:75px;top:545.8px;letter-spacing:0.3px;">120</div>
<div class="dc" style="left:597px;width:76px;top:545.8px;letter-spacing:0.3px;">6,3</div>
<div class="dc" style="left:674px;width:75px;top:545.8px;letter-spacing:0.3px;">7,9</div>
<div class="dc bo" style="left:750px;width:75px;top:545.8px;letter-spacing:0.3px;">3480</div>
<div class="dc" style="left:826px;width:40px;top:545.8px;letter-spacing:0.3px;">2,5</div>
<div class="dc" style="left:867px;width:46px;top:545.8px;letter-spacing:0.3px;">7,5</div>
<div class="dc" style="left:914px;width:81px;top:545.8px;letter-spacing:0.3px;">9</div>
<div class="dc" style="left:996px;width:84px;top:545.8px;letter-spacing:0.3px;">480</div>
<div class="dc" style="left:1081px;width:145px;top:545.8px;letter-spacing:0.3px;">30</div>
<div class="dc" style="left:1227px;width:49px;top:545.8px;letter-spacing:0.3px;">1,043</div>
<div class="hl" style="left:330px;top:562px;width:947px;background:rgba(0,0,0,0.22);"></div>
<div class="a" style="left:331px;top:563px;width:189px;height:18px;background:#a9d3e1;"></div>
<div class="a" style="left:521px;top:563px;width:755px;height:18px;background:#fff;"></div>
<div class="cd" style="left:330px;top:563px;height:18px;">AX011250000000*</div>
<div class="dc" style="left:521px;width:75px;top:562.8px;letter-spacing:0.3px;">125</div>
<div class="dc" style="left:597px;width:76px;top:562.8px;letter-spacing:0.3px;">6,3</div>
<div class="dc" style="left:674px;width:75px;top:562.8px;letter-spacing:0.3px;">7,9</div>
<div class="dc bo" style="left:750px;width:75px;top:562.8px;letter-spacing:0.3px;">3620</div>
<div class="dc" style="left:826px;width:40px;top:562.8px;letter-spacing:0.3px;">2,5</div>
<div class="dc" style="left:867px;width:46px;top:562.8px;letter-spacing:0.3px;">7,5</div>
<div class="dc" style="left:914px;width:81px;top:562.8px;letter-spacing:0.3px;">9</div>
<div class="dc" style="left:996px;width:84px;top:562.8px;letter-spacing:0.3px;">510</div>
<div class="dc" style="left:1081px;width:145px;top:562.8px;letter-spacing:0.3px;">30</div>
<div class="dc" style="left:1227px;width:49px;top:562.8px;letter-spacing:0.3px;">1,081</div>
<div class="hl" style="left:330px;top:580px;width:947px;background:rgba(0,0,0,0.22);"></div>
<div class="a" style="left:331px;top:581px;width:189px;height:18px;background:#c7d562;"></div>
<div class="a" style="left:521px;top:581px;width:755px;height:18px;background:#fff;"></div>
<div class="cd" style="left:330px;top:581px;height:18px;">AX011270000000</div>
<div class="dc" style="left:521px;width:75px;top:580.8px;letter-spacing:0.3px;">127</div>
<div class="dc" style="left:597px;width:76px;top:580.8px;letter-spacing:0.3px;">6,3</div>
<div class="dc" style="left:674px;width:75px;top:580.8px;letter-spacing:0.3px;">7,9</div>
<div class="dc bo" style="left:750px;width:75px;top:580.8px;letter-spacing:0.3px;">3670</div>
<div class="dc" style="left:826px;width:40px;top:580.8px;letter-spacing:0.3px;">2,5</div>
<div class="dc" style="left:867px;width:46px;top:580.8px;letter-spacing:0.3px;">7,5</div>
<div class="dc" style="left:914px;width:81px;top:580.8px;letter-spacing:0.3px;">9</div>
<div class="dc" style="left:996px;width:84px;top:580.8px;letter-spacing:0.3px;">510</div>
<div class="dc" style="left:1081px;width:145px;top:580.8px;letter-spacing:0.3px;">30</div>
<div class="dc" style="left:1227px;width:49px;top:580.8px;letter-spacing:0.3px;">1,097</div>
<div class="hl" style="left:330px;top:598px;width:947px;background:rgba(0,0,0,0.22);"></div>
<div class="a" style="left:331px;top:599px;width:189px;height:18px;background:#a9d3e1;"></div>
<div class="a" style="left:521px;top:599px;width:755px;height:18px;background:#fff;"></div>
<div class="cd" style="left:330px;top:599px;height:18px;">AX011300000000*</div>
<div class="dc" style="left:521px;width:75px;top:598.8px;letter-spacing:0.3px;">130</div>
<div class="dc" style="left:597px;width:76px;top:598.8px;letter-spacing:0.3px;">7</div>
<div class="dc" style="left:674px;width:75px;top:598.8px;letter-spacing:0.3px;">8,3</div>
<div class="dc bo" style="left:750px;width:75px;top:598.8px;letter-spacing:0.3px;">4080</div>
<div class="dc" style="left:826px;width:40px;top:598.8px;letter-spacing:0.3px;">2,5</div>
<div class="dc" style="left:867px;width:46px;top:598.8px;letter-spacing:0.3px;">7,5</div>
<div class="dc" style="left:914px;width:81px;top:598.8px;letter-spacing:0.3px;">8</div>
<div class="dc" style="left:996px;width:84px;top:598.8px;letter-spacing:0.3px;">530</div>
<div class="dc" style="left:1081px;width:145px;top:598.8px;letter-spacing:0.3px;">30</div>
<div class="dc" style="left:1227px;width:49px;top:598.8px;letter-spacing:0.3px;">1,126</div>
<div class="hl" style="left:330px;top:616px;width:947px;background:rgba(0,0,0,0.22);"></div>
<div class="a" style="left:331px;top:617px;width:189px;height:18px;background:#a9d3e1;"></div>
<div class="a" style="left:521px;top:617px;width:755px;height:18px;background:#fff;"></div>
<div class="cd" style="left:330px;top:617px;height:18px;">AX011330000000*</div>
<div class="dc" style="left:521px;width:75px;top:616.8px;letter-spacing:0.3px;">133</div>
<div class="dc" style="left:597px;width:76px;top:616.8px;letter-spacing:0.3px;">7</div>
<div class="dc" style="left:674px;width:75px;top:616.8px;letter-spacing:0.3px;">8,3</div>
<div class="dc bo" style="left:750px;width:75px;top:616.8px;letter-spacing:0.3px;">4170</div>
<div class="dc" style="left:826px;width:40px;top:616.8px;letter-spacing:0.3px;">2,5</div>
<div class="dc" style="left:867px;width:46px;top:616.8px;letter-spacing:0.3px;">7,5</div>
<div class="dc" style="left:914px;width:81px;top:616.8px;letter-spacing:0.3px;">8</div>
<div class="dc" style="left:996px;width:84px;top:616.8px;letter-spacing:0.3px;">530</div>
<div class="dc" style="left:1081px;width:145px;top:616.8px;letter-spacing:0.3px;">30</div>
<div class="dc" style="left:1227px;width:49px;top:616.8px;letter-spacing:0.3px;">1,532</div>
<div class="hl" style="left:330px;top:634px;width:947px;background:rgba(0,0,0,0.22);"></div>
<div class="a" style="left:331px;top:635px;width:189px;height:17px;background:#c7d562;"></div>
<div class="a" style="left:521px;top:635px;width:755px;height:17px;background:#fff;"></div>
<div class="cd" style="left:330px;top:635px;height:17px;">AX011500000000</div>
<div class="dc" style="left:521px;width:75px;top:634.8px;letter-spacing:0.3px;">151,5</div>
<div class="dc" style="left:597px;width:76px;top:634.8px;letter-spacing:0.3px;">7,4</div>
<div class="dc" style="left:674px;width:75px;top:634.8px;letter-spacing:0.3px;">8,8</div>
<div class="dc bo" style="left:750px;width:75px;top:634.8px;letter-spacing:0.3px;">4990</div>
<div class="dc" style="left:826px;width:40px;top:634.8px;letter-spacing:0.3px;">2</div>
<div class="dc" style="left:867px;width:46px;top:634.8px;letter-spacing:0.3px;">6</div>
<div class="dc" style="left:914px;width:81px;top:634.8px;letter-spacing:0.3px;">8</div>
<div class="dc" style="left:996px;width:84px;top:634.8px;letter-spacing:0.3px;">610</div>
<div class="dc" style="left:1081px;width:145px;top:634.8px;letter-spacing:0.3px;">20</div>
<div class="dc" style="left:1227px;width:49px;top:634.8px;letter-spacing:0.3px;">1,353</div>
<div class="hl" style="left:330px;top:651px;width:947px;background:rgba(0,0,0,0.22);"></div>
<div class="a" style="left:331px;top:652px;width:189px;height:18px;background:#c7d562;"></div>
<div class="a" style="left:521px;top:652px;width:755px;height:18px;background:#fff;"></div>
<div class="cd" style="left:330px;top:652px;height:18px;">AX011520000000</div>
<div class="dc" style="left:521px;width:75px;top:651.8px;letter-spacing:0.3px;">152,4</div>
<div class="dc" style="left:597px;width:76px;top:651.8px;letter-spacing:0.3px;">7,4</div>
<div class="dc" style="left:674px;width:75px;top:651.8px;letter-spacing:0.3px;">8,8</div>
<div class="dc bo" style="left:750px;width:75px;top:651.8px;letter-spacing:0.3px;">5020</div>
<div class="dc" style="left:826px;width:40px;top:651.8px;letter-spacing:0.3px;">2</div>
<div class="dc" style="left:867px;width:46px;top:651.8px;letter-spacing:0.3px;">6</div>
<div class="dc" style="left:914px;width:81px;top:651.8px;letter-spacing:0.3px;">8</div>
<div class="dc" style="left:996px;width:84px;top:651.8px;letter-spacing:0.3px;">610</div>
<div class="dc" style="left:1081px;width:145px;top:651.8px;letter-spacing:0.3px;">20</div>
<div class="dc" style="left:1227px;width:49px;top:651.8px;letter-spacing:0.3px;">1,360</div>
<div class="hl" style="left:330px;top:669px;width:947px;background:rgba(0,0,0,0.22);"></div>
<div class="a" style="left:331px;top:670px;width:189px;height:18px;background:#a9d3e1;"></div>
<div class="a" style="left:521px;top:670px;width:755px;height:18px;background:#fff;"></div>
<div class="cd" style="left:330px;top:670px;height:18px;">AX011600000000*</div>
<div class="dc" style="left:521px;width:75px;top:669.8px;letter-spacing:0.3px;">160</div>
<div class="dc" style="left:597px;width:76px;top:669.8px;letter-spacing:0.3px;">7,9</div>
<div class="dc" style="left:674px;width:75px;top:669.8px;letter-spacing:0.3px;">9,3</div>
<div class="dc bo" style="left:750px;width:75px;top:669.8px;letter-spacing:0.3px;">5500</div>
<div class="dc" style="left:826px;width:40px;top:669.8px;letter-spacing:0.3px;">2</div>
<div class="dc" style="left:867px;width:46px;top:669.8px;letter-spacing:0.3px;">6</div>
<div class="dc" style="left:914px;width:81px;top:669.8px;letter-spacing:0.3px;">7</div>
<div class="dc" style="left:996px;width:84px;top:669.8px;letter-spacing:0.3px;">660</div>
<div class="dc" style="left:1081px;width:145px;top:669.8px;letter-spacing:0.3px;">20</div>
<div class="dc" style="left:1227px;width:49px;top:669.8px;letter-spacing:0.3px;">1,429</div>
<div class="hl" style="left:330px;top:687px;width:947px;background:rgba(0,0,0,0.22);"></div>
<div class="a" style="left:331px;top:688px;width:189px;height:18px;background:#a9d3e1;"></div>
<div class="a" style="left:521px;top:688px;width:755px;height:18px;background:#fff;"></div>
<div class="cd" style="left:330px;top:688px;height:18px;">AX012000000000*</div>
<div class="dc" style="left:521px;width:75px;top:687.8px;letter-spacing:0.3px;">200</div>
<div class="dc" style="left:597px;width:76px;top:687.8px;letter-spacing:0.3px;">11</div>
<div class="dc" style="left:674px;width:75px;top:687.8px;letter-spacing:0.3px;">12,3</div>
<div class="dc bo" style="left:750px;width:75px;top:687.8px;letter-spacing:0.3px;">9670</div>
<div class="dc" style="left:826px;width:40px;top:687.8px;letter-spacing:0.3px;">1,5</div>
<div class="dc" style="left:867px;width:46px;top:687.8px;letter-spacing:0.3px;">4,5</div>
<div class="dc" style="left:914px;width:81px;top:687.8px;letter-spacing:0.3px;">7</div>
<div class="dc" style="left:996px;width:84px;top:687.8px;letter-spacing:0.3px;">850</div>
<div class="dc" style="left:1081px;width:145px;top:687.8px;letter-spacing:0.3px;">10</div>
<div class="dc" style="left:1227px;width:49px;top:687.8px;letter-spacing:0.3px;">1,797</div>
<div class="hl" style="left:330px;top:705px;width:947px;background:rgba(0,0,0,0.22);"></div>
<div class="a" style="left:331px;top:706px;width:189px;height:18px;background:#a9d3e1;"></div>
<div class="a" style="left:521px;top:706px;width:755px;height:18px;background:#fff;"></div>
<div class="cd" style="left:330px;top:706px;height:18px;">AX012030000000*</div>
<div class="dc" style="left:521px;width:75px;top:705.8px;letter-spacing:0.3px;">203,2</div>
<div class="dc" style="left:597px;width:76px;top:705.8px;letter-spacing:0.3px;">11</div>
<div class="dc" style="left:674px;width:75px;top:705.8px;letter-spacing:0.3px;">12,3</div>
<div class="dc bo" style="left:750px;width:75px;top:705.8px;letter-spacing:0.3px;">9810</div>
<div class="dc" style="left:826px;width:40px;top:705.8px;letter-spacing:0.3px;">1,5</div>
<div class="dc" style="left:867px;width:46px;top:705.8px;letter-spacing:0.3px;">4,5</div>
<div class="dc" style="left:914px;width:81px;top:705.8px;letter-spacing:0.3px;">7</div>
<div class="dc" style="left:996px;width:84px;top:705.8px;letter-spacing:0.3px;">850</div>
<div class="dc" style="left:1081px;width:145px;top:705.8px;letter-spacing:0.3px;">10</div>
<div class="dc" style="left:1227px;width:49px;top:705.8px;letter-spacing:0.3px;">1,822</div>
<div class="hl" style="left:330px;top:723px;width:947px;background:rgba(0,0,0,0.22);"></div>
<div class="a" style="left:331px;top:724px;width:189px;height:17px;background:#a9d3e1;"></div>
<div class="a" style="left:521px;top:724px;width:755px;height:17px;background:#fff;"></div>
<div class="cd" style="left:330px;top:724px;height:17px;">AX012500000000*</div>
<div class="dc" style="left:521px;width:75px;top:723.8px;letter-spacing:0.3px;">250</div>
<div class="dc" style="left:597px;width:76px;top:723.8px;letter-spacing:0.3px;">11</div>
<div class="dc" style="left:674px;width:75px;top:723.8px;letter-spacing:0.3px;">12,8</div>
<div class="dc bo" style="left:750px;width:75px;top:723.8px;letter-spacing:0.3px;">12270</div>
<div class="dc" style="left:826px;width:40px;top:723.8px;letter-spacing:0.3px;">1,2</div>
<div class="dc" style="left:867px;width:46px;top:723.8px;letter-spacing:0.3px;">3,7</div>
<div class="dc" style="left:914px;width:81px;top:723.8px;letter-spacing:0.3px;">7</div>
<div class="dc" style="left:996px;width:84px;top:723.8px;letter-spacing:0.3px;">1500</div>
<div class="dc" style="left:1081px;width:145px;top:723.8px;letter-spacing:0.8px;">10 m pz. dritti/ straight</div>
<div class="dc" style="left:1227px;width:49px;top:723.8px;letter-spacing:0.3px;">0,760</div>
<div class="hl" style="left:330px;top:740px;width:947px;background:rgba(0,0,0,0.22);"></div>
<div class="a" style="left:331px;top:741px;width:189px;height:18px;background:#a9d3e1;"></div>
<div class="a" style="left:521px;top:741px;width:755px;height:18px;background:#fff;"></div>
<div class="cd" style="left:330px;top:741px;height:18px;">AX012540000000*</div>
<div class="dc" style="left:521px;width:75px;top:740.8px;letter-spacing:0.3px;">254</div>
<div class="dc" style="left:597px;width:76px;top:740.8px;letter-spacing:0.3px;">11</div>
<div class="dc" style="left:674px;width:75px;top:740.8px;letter-spacing:0.3px;">12,8</div>
<div class="dc bo" style="left:750px;width:75px;top:740.8px;letter-spacing:0.3px;">12460</div>
<div class="dc" style="left:826px;width:40px;top:740.8px;letter-spacing:0.3px;">1,2</div>
<div class="dc" style="left:867px;width:46px;top:740.8px;letter-spacing:0.3px;">3,7</div>
<div class="dc" style="left:914px;width:81px;top:740.8px;letter-spacing:0.3px;">7</div>
<div class="dc" style="left:996px;width:84px;top:740.8px;letter-spacing:0.3px;">1500</div>
<div class="dc" style="left:1081px;width:145px;top:740.8px;letter-spacing:0.8px;">10 m pz. dritti/ straight</div>
<div class="dc" style="left:1227px;width:49px;top:740.8px;letter-spacing:0.3px;">0,782</div>
<div class="hl" style="left:330px;top:758px;width:947px;background:rgba(0,0,0,0.22);"></div>
<div class="a" style="left:331px;top:759px;width:189px;height:18px;background:#a9d3e1;"></div>
<div class="a" style="left:521px;top:759px;width:755px;height:18px;background:#fff;"></div>
<div class="cd" style="left:330px;top:759px;height:18px;">AX013000000000*</div>
<div class="dc" style="left:521px;width:75px;top:758.8px;letter-spacing:0.3px;">300</div>
<div class="dc" style="left:597px;width:76px;top:758.8px;letter-spacing:0.3px;">11,5</div>
<div class="dc" style="left:674px;width:75px;top:758.8px;letter-spacing:0.3px;">13,3</div>
<div class="dc bo" style="left:750px;width:75px;top:758.8px;letter-spacing:0.3px;">15350</div>
<div class="dc" style="left:826px;width:40px;top:758.8px;letter-spacing:0.3px;">1</div>
<div class="dc" style="left:867px;width:46px;top:758.8px;letter-spacing:0.3px;">3</div>
<div class="dc" style="left:914px;width:81px;top:758.8px;letter-spacing:0.3px;">5</div>
<div class="dc" style="left:996px;width:84px;top:758.8px;letter-spacing:0.3px;">1800</div>
<div class="dc" style="left:1081px;width:145px;top:758.8px;letter-spacing:0.8px;">10 m pz. dritti/ straight</div>
<div class="dc" style="left:1227px;width:49px;top:758.8px;letter-spacing:0.3px;">1,067</div>
<div class="hl" style="left:330px;top:776px;width:947px;background:rgba(0,0,0,0.22);"></div>
<div class="a" style="left:331px;top:777px;width:189px;height:18px;background:#a9d3e1;"></div>
<div class="a" style="left:521px;top:777px;width:755px;height:18px;background:#fff;"></div>
<div class="cd" style="left:330px;top:777px;height:18px;">AX013050000000*</div>
<div class="dc" style="left:521px;width:75px;top:776.8px;letter-spacing:0.3px;">304,8</div>
<div class="dc" style="left:597px;width:76px;top:776.8px;letter-spacing:0.3px;">11,5</div>
<div class="dc" style="left:674px;width:75px;top:776.8px;letter-spacing:0.3px;">13,3</div>
<div class="dc bo" style="left:750px;width:75px;top:776.8px;letter-spacing:0.3px;">15590</div>
<div class="dc" style="left:826px;width:40px;top:776.8px;letter-spacing:0.3px;">1</div>
<div class="dc" style="left:867px;width:46px;top:776.8px;letter-spacing:0.3px;">3</div>
<div class="dc" style="left:914px;width:81px;top:776.8px;letter-spacing:0.3px;">5</div>
<div class="dc" style="left:996px;width:84px;top:776.8px;letter-spacing:0.3px;">1800</div>
<div class="dc" style="left:1081px;width:145px;top:776.8px;letter-spacing:0.8px;">10 m pz. dritti/ straight</div>
<div class="dc" style="left:1227px;width:49px;top:776.8px;letter-spacing:0.3px;">1,098</div>
<div class="hl" style="left:330px;top:794px;width:947px;background:rgba(0,0,0,0.22);"></div>
<div class="vl" style="left:330px;top:65px;height:730px;background:rgba(0,0,0,0.38);"></div>
<div class="vl" style="left:520px;top:65px;height:730px;background:rgba(0,0,0,0.38);"></div>
<div class="vl" style="left:596px;top:65px;height:730px;background:rgba(0,0,0,0.38);"></div>
<div class="vl" style="left:673px;top:65px;height:730px;background:rgba(0,0,0,0.38);"></div>
<div class="vl" style="left:749px;top:65px;height:730px;background:rgba(0,0,0,0.38);"></div>
<div class="vl" style="left:825px;top:65px;height:730px;background:rgba(0,0,0,0.38);"></div>
<div class="vl" style="left:866px;top:65px;height:730px;background:rgba(0,0,0,0.38);"></div>
<div class="vl" style="left:913px;top:65px;height:730px;background:rgba(0,0,0,0.38);"></div>
<div class="vl" style="left:995px;top:65px;height:730px;background:rgba(0,0,0,0.38);"></div>
<div class="vl" style="left:1080px;top:65px;height:730px;background:rgba(0,0,0,0.38);"></div>
<div class="vl" style="left:1226px;top:65px;height:730px;background:rgba(0,0,0,0.38);"></div>
<div class="vl" style="left:1276px;top:65px;height:730px;background:rgba(0,0,0,0.38);"></div>
<!-- LEFT PANEL -->
<div class="a" style="left:9px;top:56px;width:67px;height:54px;background:#afc53d;"></div>
<svg class="a" style="left:9px;top:56px;" width="67" height="54" viewBox="0 0 67 54">
  <polygon points="6,12 60,7 60,11.5 6,16.5" fill="#fff"/>
  <polygon points="6,40 60,35 60,39.5 6,44.5" fill="#fff"/>
  <g transform="rotate(-5 30 27)" fill="none" stroke="#fff" stroke-width="5.4">
    <path d="M23.2,16.2 L23.2,28.5 Q23.2,34.2 16.5,34.2 Q11.5,34.2 9.5,30"/>
    <path d="M37,17 L37,37"/>
    <path d="M37,19.2 L46,19.2 Q53.2,19.2 53.2,24.6 Q53.2,30 46,30 L37,30"/>
  </g>
</svg>
<div class="t" style="left:85.5px;top:84px;font-size:12px;color:#2a2a2a;letter-spacing:0.38px;-webkit-text-stroke:0.15px #2a2a2a;line-height:14px;">disponibile a magazzino</div>
<div class="t" style="left:85.5px;top:95.5px;font-size:12px;font-style:italic;color:#2a2a2a;letter-spacing:0.22px;-webkit-text-stroke:0.15px #2a2a2a;line-height:14px;">available on stock</div>
<div class="a" style="left:9px;top:133px;width:291px;height:2px;background:#b0b0b0;"></div>

<svg class="a" style="left:0;top:140px;" width="110" height="80" viewBox="0 140 110 80">
  <ellipse cx="53" cy="179.5" rx="39" ry="31" fill="#8ec8db"/>
  <ellipse cx="53" cy="179.5" rx="35.2" ry="27.2" fill="#b3dbe8"/>
  <ellipse cx="53" cy="179.5" rx="32.5" ry="24.5" fill="#f7fbfc"/>
  <ellipse cx="53.5" cy="179.5" rx="27" ry="19.5" fill="#dfe9ee"/>
  <rect x="29.5" y="171" width="47" height="1" fill="#8a8a8a"/>
  <rect x="29.5" y="187" width="47" height="1" fill="#8a8a8a"/>
</svg>
<div class="t" style="left:25.5px;top:171px;font-size:14px;font-weight:bold;color:#161616;letter-spacing:0.55px;line-height:16px;-webkit-text-stroke:0.25px #161616;">3,2-11,5</div>

<svg class="a" style="left:160px;top:135px;" width="60" height="90" viewBox="160 135 60 90">
  <path d="M182.7,189.5 L182.7,156.4 A7.2,7.2 0 0 1 197.1,156.4 L197.1,189.5 A13.3,11.24 0 1 1 182.7,189.5 Z" fill="#fff" stroke="#151515" stroke-width="1.5"/>
  <path d="M186.4,165.7 L192.8,178 L192.8,193 L186.4,193 Z" fill="#808080"/>
  <ellipse cx="190.2" cy="199" rx="10.2" ry="7.6" fill="#808080"/>
</svg>
<div class="t" style="left:209.5px;top:151.2px;font-size:14px;font-weight:bold;color:#161616;letter-spacing:1.5px;line-height:16px;-webkit-text-stroke:0.25px #161616;">+60°C</div>
<div class="t" style="left:212.5px;top:184.2px;font-size:14px;font-weight:bold;color:#161616;letter-spacing:1.5px;line-height:16px;-webkit-text-stroke:0.25px #161616;">-25°C</div>
<div class="a" style="left:9px;top:230px;width:291px;height:2px;background:#b0b0b0;"></div>

<div class="t" style="left:9.5px;top:260px;font-size:12.5px;font-weight:bold;color:#1e1e1e;letter-spacing:0.78px;line-height:15px;-webkit-text-stroke:0.2px #1e1e1e;">ARTICOLI DELLA STESSA SERIE</div>
<div class="t" style="left:9.5px;top:276px;font-size:12.5px;font-weight:bold;font-style:italic;color:#1e1e1e;letter-spacing:0.71px;line-height:15px;-webkit-text-stroke:0.2px #1e1e1e;">ITEMS IN THE SAME SERIES</div>

<svg class="a" style="left:0;top:300px;" width="170" height="130" viewBox="0 300 170 130">
  <defs>
    <clipPath id="cl"><polygon points="9,310.5 136,353.5 160,380 112,423.5 9,384"/></clipPath>
    <linearGradient id="bg1" x1="0" y1="0" x2="0" y2="1">
      <stop offset="0" stop-color="#8a8a8a"/>
      <stop offset="0.3" stop-color="#a6a6a6"/>
      <stop offset="0.7" stop-color="#909090"/>
      <stop offset="1" stop-color="#7c7c7c"/>
    </linearGradient>
    <radialGradient id="ig" cx="0.45" cy="0.4" r="0.7">
      <stop offset="0" stop-color="#6a6a6a"/>
      <stop offset="1" stop-color="#4a4a4a"/>
    </radialGradient>
  </defs>
  <g clip-path="url(#cl)">
    <g transform="translate(129 389) rotate(21)">
      <rect x="-200" y="-40" width="200" height="80" fill="url(#bg1)"/>
      <g fill="none" stroke="#7b7b7b" stroke-width="2.6" opacity="0.8">
        <path d="M-9.5,-37 A25,37 0 0 0 -9.5,37"/>
        <path d="M-18.1,-37 A25,37 0 0 0 -18.1,37"/>
        <path d="M-26.7,-37 A25,37 0 0 0 -26.7,37"/>
        <path d="M-35.3,-37 A25,37 0 0 0 -35.3,37"/>
        <path d="M-43.9,-37 A25,37 0 0 0 -43.9,37"/>
        <path d="M-52.5,-37 A25,37 0 0 0 -52.5,37"/>
        <path d="M-61.099999999999994,-37 A25,37 0 0 0 -61.099999999999994,37"/>
        <path d="M-69.69999999999999,-37 A25,37 0 0 0 -69.69999999999999,37"/>
        <path d="M-78.3,-37 A25,37 0 0 0 -78.3,37"/>
        <path d="M-86.89999999999999,-37 A25,37 0 0 0 -86.89999999999999,37"/>
        <path d="M-95.5,-37 A25,37 0 0 0 -95.5,37"/>
        <path d="M-104.1,-37 A25,37 0 0 0 -104.1,37"/>
        <path d="M-112.69999999999999,-37 A25,37 0 0 0 -112.69999999999999,37"/>
        <path d="M-121.3,-37 A25,37 0 0 0 -121.3,37"/>
        <path d="M-129.89999999999998,-37 A25,37 0 0 0 -129.89999999999998,37"/>
        <path d="M-138.5,-37 A25,37 0 0 0 -138.5,37"/>
        <path d="M-147.1,-37 A25,37 0 0 0 -147.1,37"/>
        <path d="M-155.7,-37 A25,37 0 0 0 -155.7,37"/>
        <path d="M-164.29999999999998,-37 A25,37 0 0 0 -164.29999999999998,37"/>
      </g>
      <g fill="none" stroke="#82b3e0" stroke-width="2.4">
        <path d="M-6.0,-37 A25,37 0 0 0 -6.0,37"/>
        <path d="M-14.6,-37 A25,37 0 0 0 -14.6,37"/>
        <path d="M-23.2,-37 A25,37 0 0 0 -23.2,37"/>
        <path d="M-31.799999999999997,-37 A25,37 0 0 0 -31.799999999999997,37"/>
        <path d="M-40.4,-37 A25,37 0 0 0 -40.4,37"/>
        <path d="M-49.0,-37 A25,37 0 0 0 -49.0,37"/>
        <path d="M-57.599999999999994,-37 A25,37 0 0 0 -57.599999999999994,37"/>
        <path d="M-66.19999999999999,-37 A25,37 0 0 0 -66.19999999999999,37"/>
        <path d="M-74.8,-37 A25,37 0 0 0 -74.8,37"/>
        <path d="M-83.39999999999999,-37 A25,37 0 0 0 -83.39999999999999,37"/>
        <path d="M-92.0,-37 A25,37 0 0 0 -92.0,37"/>
        <path d="M-100.6,-37 A25,37 0 0 0 -100.6,37"/>
        <path d="M-109.19999999999999,-37 A25,37 0 0 0 -109.19999999999999,37"/>
        <path d="M-117.8,-37 A25,37 0 0 0 -117.8,37"/>
        <path d="M-126.39999999999999,-37 A25,37 0 0 0 -126.39999999999999,37"/>
        <path d="M-135.0,-37 A25,37 0 0 0 -135.0,37"/>
        <path d="M-143.6,-37 A25,37 0 0 0 -143.6,37"/>
        <path d="M-152.2,-37 A25,37 0 0 0 -152.2,37"/>
        <path d="M-160.79999999999998,-37 A25,37 0 0 0 -160.79999999999998,37"/>
      </g>
    </g>
  </g>
  <g transform="translate(129.4 389.5) rotate(30)">
      <ellipse cx="0" cy="0" rx="25.5" ry="37" fill="#9b9b9b"/>
      <ellipse cx="-3" cy="-1.5" rx="21" ry="33" fill="url(#ig)"/>
  </g>
</svg>

<div class="t" style="left:138px;top:429px;font-size:11px;font-weight:bold;color:#1a1a1a;letter-spacing:0.56px;line-height:13px;-webkit-text-stroke:0.2px #1a1a1a;">APOLLO NL1&nbsp; (cod. A1) p.69</div>
<div class="a" style="left:9px;top:447px;width:291px;height:2px;background:#a2b2b8;"></div>

<div class="t" style="left:9px;top:716px;font-size:11.5px;color:#1e1e1e;letter-spacing:0.57px;line-height:14px;-webkit-text-stroke:0.15px #1e1e1e;">*Disponibile su richiesta, per quantitativi da</div>
<div class="t" style="left:16px;top:730px;font-size:11.5px;color:#1e1e1e;letter-spacing:0.57px;line-height:14px;-webkit-text-stroke:0.15px #1e1e1e;">concordare con l’ufficio vendite.</div>
<div class="t" style="left:12.5px;top:744px;font-size:11.5px;font-style:italic;color:#1e1e1e;letter-spacing:0.4px;line-height:14px;-webkit-text-stroke:0.15px #1e1e1e;">*Available on request,contact our sales office</div>
<div class="t" style="left:16px;top:755.5px;font-size:11.5px;font-style:italic;color:#1e1e1e;letter-spacing:0.4px;line-height:14px;-webkit-text-stroke:0.15px #1e1e1e;">for more info and quantities.</div>
<div class="t" style="left:9px;top:775.5px;font-size:11.5px;color:#1e1e1e;letter-spacing:0.57px;line-height:14px;-webkit-text-stroke:0.15px #1e1e1e;">I dati tecnici riportati sono stati misurati a 23°C</div>
<div class="t" style="left:9px;top:789px;font-size:11.5px;color:#1e1e1e;letter-spacing:0.57px;line-height:14px;-webkit-text-stroke:0.15px #1e1e1e;">e al 50% di umidità.</div>
<div class="t" style="left:9px;top:803.5px;font-size:11.5px;font-style:italic;color:#1e1e1e;letter-spacing:0.4px;line-height:14px;-webkit-text-stroke:0.15px #1e1e1e;">The technical data here reported have been</div>
<div class="t" style="left:9px;top:815px;font-size:11.5px;font-style:italic;color:#1e1e1e;letter-spacing:0.4px;line-height:14px;-webkit-text-stroke:0.15px #1e1e1e;">measured at 23°C with 50% umidity.</div>

</body></html>
